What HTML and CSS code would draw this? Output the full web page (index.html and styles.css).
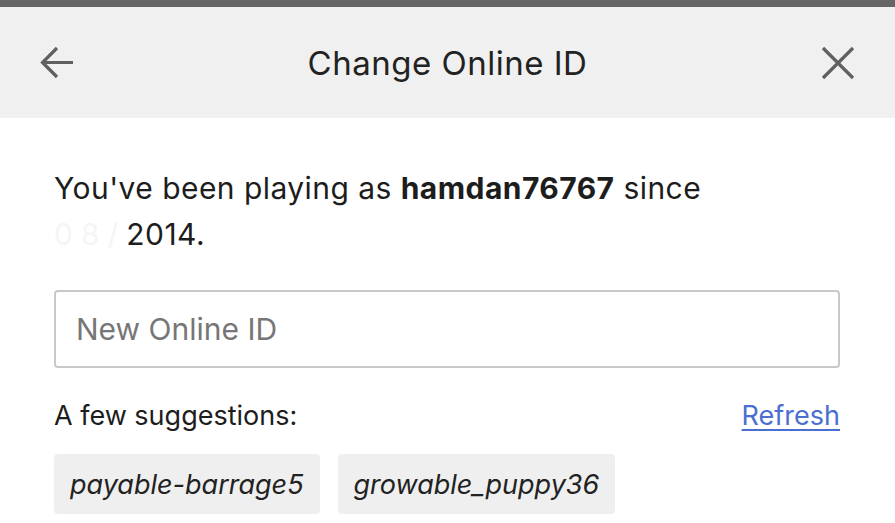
FILE: index.html
```html
<!DOCTYPE html>
<html lang="en">
<head>
<meta charset="UTF-8">
<meta name="viewport" content="width=device-width, initial-scale=1.0">
<title>Change Online ID</title>
<link rel="stylesheet" href="styles.css">
</head>
<body>
<div class="topbar"></div>
<div class="header">
    <button class="icon-btn back" aria-label="Back">
        <svg width="36" height="36" viewBox="0 0 36 36">
            <path d="M35 17.5H4.5M19 3L4.5 17.5L19 32" fill="none" stroke="#606060" stroke-width="3.2"/>
        </svg>
    </button>
    <h1 class="title">Change Online ID</h1>
    <button class="icon-btn close" aria-label="Close">
        <svg width="34" height="34" viewBox="0 0 34 34">
            <path d="M2 2L32 32M32 2L2 32" fill="none" stroke="#606060" stroke-width="3.2"/>
        </svg>
    </button>
</div>
<div class="content">
    <p class="intro">You've been playing as <b>hamdan76767</b> since <span class="blur">08/</span>2014.</p>
    <input class="id-input" type="text" placeholder="New Online ID">
    <div class="suggest-row">
        <span class="suggest-label">A few suggestions:</span>
        <a href="#" class="refresh">Refresh</a>
    </div>
    <div class="chips">
        <button class="chip">payable-barrage5</button>
        <button class="chip">growable_puppy36</button>
    </div>
</div>
</body>
</html>
```

FILE: styles.css
```css
body {
    margin: 0;
    background-color: #fff;
    font-family: "Inter", "Liberation Sans", sans-serif;
    color: #1d1d1d;
}

.topbar {
    height: 7px;
    background-color: #666;
}

.header {
    height: 111px;
    background-color: #f0f0f0;
    display: flex;
    align-items: center;
    justify-content: space-between;
    padding: 0 40px 0 38px;
}

.icon-btn {
    background: none;
    border: none;
    padding: 0;
    display: flex;
    cursor: pointer;
}

.back {
    margin-top: 1px;
}

.close {
    margin-top: 1px;
}

.title {
    margin: 0;
    font-size: 33px;
    font-weight: 400;
    letter-spacing: 0.5px;
    color: #222;
}

.content {
    padding: 47px 55px 0 54px;
}

.intro {
    margin: 0;
    max-width: 740px;
    font-size: 30px;
    line-height: 46px;
    letter-spacing: 0.45px;
    color: #1d1d1d;
}

.intro b {
    font-weight: 700;
}

/* date is blurred out in the original */
.blur {
    color: #f5f5f5;
    letter-spacing: 8px;
}

.id-input {
    display: block;
    box-sizing: border-box;
    width: 100%;
    height: 78px;
    margin-top: 33px;
    border: 2px solid #c8c8c8;
    border-radius: 4px;
    padding: 0 20px;
    font-family: inherit;
    font-size: 30px;
    color: #1d1d1d;
    outline: none;
}

.id-input::placeholder {
    color: #767676;
}

.suggest-row {
    display: flex;
    justify-content: space-between;
    align-items: center;
    margin-top: 31px;
    font-size: 27px;
    line-height: 33px;
}

.refresh {
    color: #4a6fd1;
    text-decoration: underline;
    text-underline-offset: 4px;
}

.chips {
    display: flex;
    gap: 18px;
    margin-top: 22px;
}

.chip {
    height: 60px;
    padding: 0 16px;
    background-color: #efefef;
    border: none;
    border-radius: 4px;
    font-family: inherit;
    font-size: 27px;
    font-style: italic;
    color: #222;
}
```
